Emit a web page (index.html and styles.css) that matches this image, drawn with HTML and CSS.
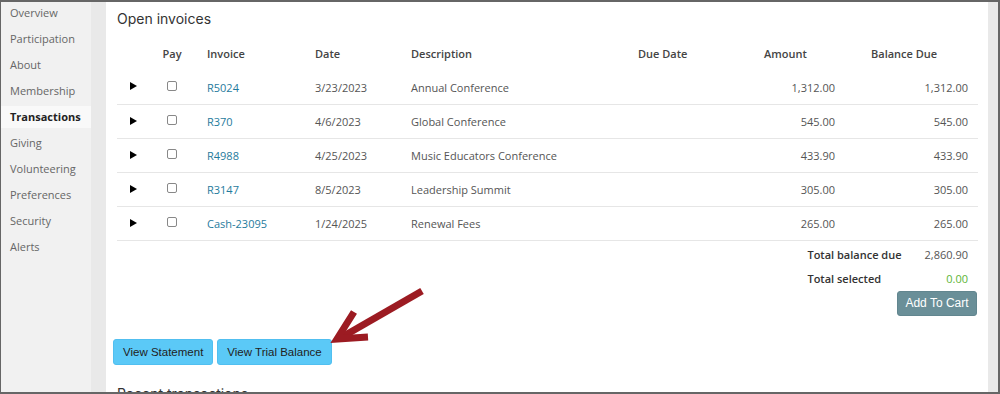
FILE: index.html
```html
<!DOCTYPE html>
<html lang="en">
<head>
  <meta charset="UTF-8">
  <title>Transactions</title>
  <link rel="stylesheet" href="styles.css">
</head>
<body>
  <div class="frame">
    <nav class="sidebar">
      <a class="nav-item">Overview</a>
      <a class="nav-item">Participation</a>
      <a class="nav-item">About</a>
      <a class="nav-item">Membership</a>
      <a class="nav-item active">Transactions</a>
      <a class="nav-item">Giving</a>
      <a class="nav-item">Volunteering</a>
      <a class="nav-item">Preferences</a>
      <a class="nav-item">Security</a>
      <a class="nav-item">Alerts</a>
    </nav>

    <div class="content-area">
      <main class="panel">
        <h2 class="section-title">Open invoices</h2>
        <table class="invoices">
          <colgroup>
            <col style="width:33px">
            <col style="width:49px">
            <col style="width:108px">
            <col style="width:96px">
            <col style="width:227px">
            <col style="width:126px">
            <col style="width:107px">
            <col style="width:115px">
          </colgroup>
          <thead>
            <tr>
              <th></th>
              <th class="col-pay">Pay</th>
              <th>Invoice</th>
              <th>Date</th>
              <th>Description</th>
              <th>Due Date</th>
              <th>Amount</th>
              <th>Balance Due</th>
            </tr>
          </thead>
          <tbody id="invoiceRows"></tbody>
        </table>

        <div class="totals">
          <div class="totals-grid">
            <span class="total-label">Total balance due</span>
            <span class="total-value">2,860.90</span>
            <span class="total-label">Total selected</span>
            <span class="total-value selected">0.00</span>
          </div>
          <button class="btn btn-cart">Add To Cart</button>
        </div>

        <div class="actions">
          <button class="btn btn-light">View Statement</button>
          <button class="btn btn-light">View Trial Balance</button>
        </div>

        <h2 class="section-title">Recent transactions</h2>
      </main>
    </div>

    <svg class="callout" width="1000" height="394" viewBox="0 0 1000 394">
      <line x1="422" y1="291" x2="342" y2="337" stroke="#9c1b22" stroke-width="7"/>
      <polyline points="354,312 337,339 368,337" fill="none" stroke="#9c1b22" stroke-width="7" stroke-linejoin="miter"/>
    </svg>
  </div>

  <script>
    const invoices = [
      { id: 'R5024', date: '3/23/2023', desc: 'Annual Conference', amount: '1,312.00', balance: '1,312.00' },
      { id: 'R370', date: '4/6/2023', desc: 'Global Conference', amount: '545.00', balance: '545.00' },
      { id: 'R4988', date: '4/25/2023', desc: 'Music Educators Conference', amount: '433.90', balance: '433.90' },
      { id: 'R3147', date: '8/5/2023', desc: 'Leadership Summit', amount: '305.00', balance: '305.00' },
      { id: 'Cash-23095', date: '1/24/2025', desc: 'Renewal Fees', amount: '265.00', balance: '265.00' }
    ];

    document.getElementById('invoiceRows').innerHTML = invoices.map(inv => `
      <tr>
        <td class="col-toggle"><span class="caret"></span></td>
        <td class="col-pay"><input type="checkbox" class="check"></td>
        <td><a class="inv-link">${inv.id}</a></td>
        <td>${inv.date}</td>
        <td>${inv.desc}</td>
        <td></td>
        <td class="num amount">${inv.amount}</td>
        <td class="num balance">${inv.balance}</td>
      </tr>
    `).join('');
  </script>
</body>
</html>
```

FILE: styles.css
```css
* { box-sizing: border-box; margin: 0; padding: 0; }
html, body {
  width: 1000px;
  height: 394px;
  overflow: hidden;
  background: #fff;
}
body {
  font-family: 'Open Sans', sans-serif;
  font-size: 11px;
  color: #555;
}
.frame {
  position: relative;
  display: flex;
  width: 1000px;
  height: 394px;
  overflow: hidden;
  border: 1px solid #666;
  border-top-width: 2px;
  border-right-width: 2px;
  border-bottom-width: 2px;
}

/* sidebar */
.sidebar {
  width: 90px;
  flex-shrink: 0;
  background: #f1f1f1;
  display: flex;
  flex-direction: column;
  gap: 4px;
}
.nav-item {
  display: block;
  height: 22px;
  line-height: 22px;
  padding-left: 9px;
  color: #666;
  text-decoration: none;
}
.nav-item.active {
  background: #f9f9f9;
  color: #222;
  font-weight: 700;
}

/* main area */
.content-area {
  flex: 1;
  background: #e9e9e9;
  padding: 0 10px 0 15px;
  display: flex;
}
.panel {
  flex: 1;
  background: #fff;
  padding: 0 10px 0 11px;
}
.section-title {
  font-family: 'Inter', sans-serif;
  font-weight: 400;
  font-size: 14px;
  line-height: 18px;
  padding: 8px 0;
  color: #333;
}

/* table */
.invoices {
  width: 100%;
  table-layout: fixed;
  border-collapse: collapse;
}
.invoices th {
  height: 34px;
  padding: 0 8px;
  text-align: left;
  font-weight: 600;
  color: #444;
}
.invoices td {
  height: 34px;
  padding: 1px 8px 0;
  border-bottom: 1px solid #e6e6e6;
  white-space: nowrap;
}
.invoices .col-pay { text-align: center; padding: 0 5px 0 0; }
.invoices .col-toggle { padding: 0 0 0 13px; }
.invoices .num { text-align: right; }
.invoices .amount { padding-right: 28px; }
.invoices .balance { padding-right: 10px; }
.caret {
  display: inline-block;
  width: 0;
  height: 0;
  border-top: 4px solid transparent;
  border-bottom: 4px solid transparent;
  border-left: 7px solid #000;
  vertical-align: middle;
  margin-top: -4px;
}
.check {
  appearance: none;
  width: 10px;
  height: 10px;
  border: 1px solid #888;
  border-radius: 2px;
  background: #fff;
  vertical-align: middle;
  margin-top: -5px;
}
.inv-link { color: #1f7b9d; text-decoration: none; }

/* totals */
.totals {
  display: flex;
  flex-direction: column;
  align-items: flex-end;
  padding-top: 2px;
}
.totals-grid {
  display: grid;
  grid-template-columns: auto auto;
  column-gap: 23px;
  padding-right: 10px;
  line-height: 24px;
}
.total-label { font-weight: 600; color: #333; }
.total-value { text-align: right; }
.total-value.selected { color: #5db536; }

/* buttons */
.btn {
  font-family: 'Liberation Sans', Arial, sans-serif;
  font-size: 12px;
  border-radius: 3px;
  cursor: pointer;
}
.btn-cart {
  width: 80px;
  height: 25px;
  margin-right: 1px;
  background: #6a8f98;
  color: #fff;
  border: 1px solid #62868f;
}
.actions {
  display: flex;
  gap: 4px;
  margin: 23px 0 0 -4px;
}
.btn-light {
  height: 26px;
  padding: 0 9px;
  font-size: 11.5px;
  background: #5bc9f7;
  border: 1px solid #51bff0;
  color: #222;
}
.actions + .section-title { margin-top: 12px; }

/* annotation */
.callout {
  position: absolute;
  left: -1px;
  top: -2px;
  pointer-events: none;
}
```
